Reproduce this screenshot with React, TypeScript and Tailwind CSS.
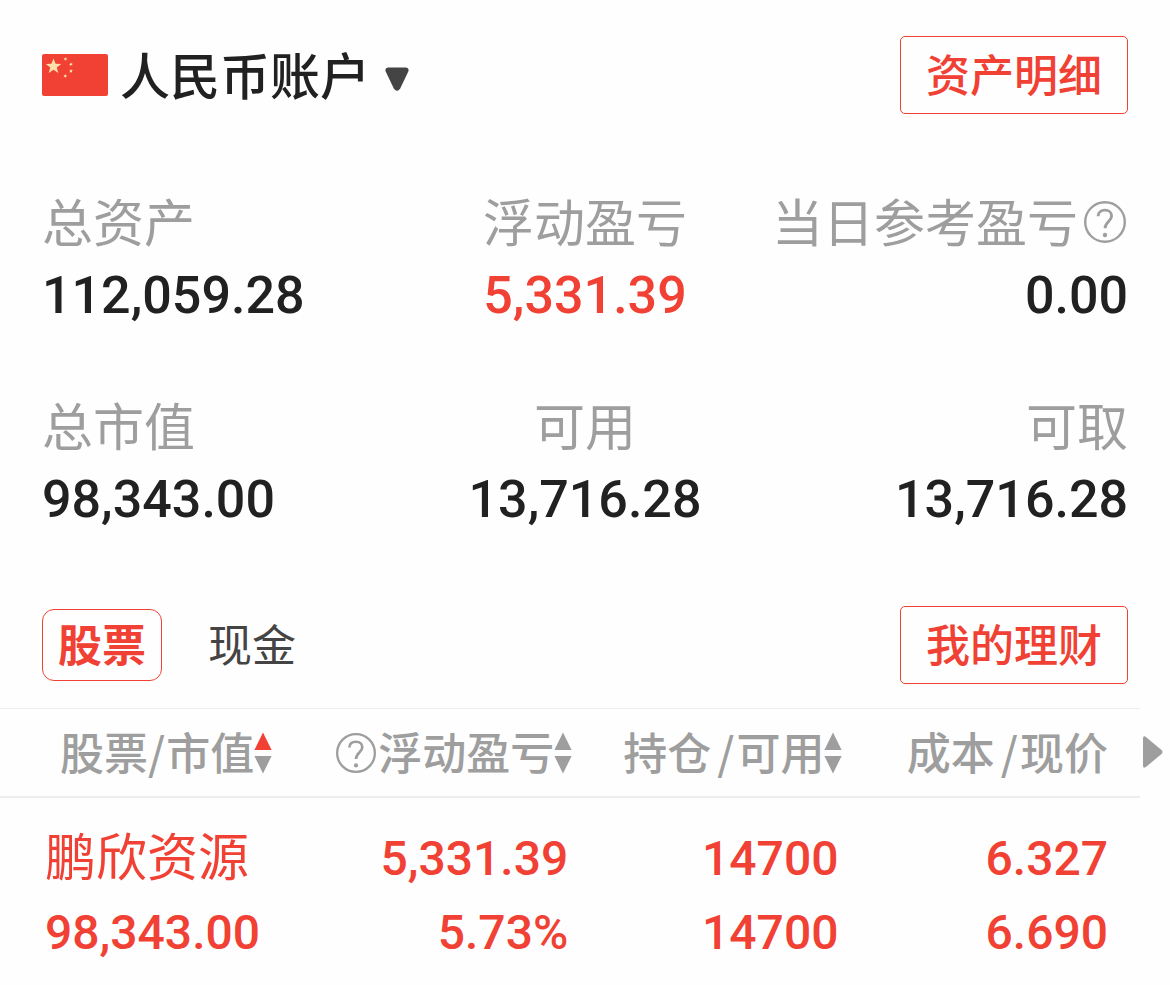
import { useState } from 'react';

const RED = 'text-[#f04134]';

function Flag() {
  const star = 'M0 -1 L0.26 -0.33 L0.97 -0.3 L0.41 0.14 L0.6 0.81 L0 0.42 L-0.6 0.81 L-0.41 0.14 L-0.97 -0.3 L-0.26 -0.33 Z';
  return (
    <svg viewBox="0 0 66 42" className="h-[42px] w-[66px] shrink-0" aria-hidden="true">
      <rect width="66" height="42" rx="2" fill="#f04134" />
      <g fill="#fddfa9">
        <path d={star} transform="translate(11.5 12.5) scale(8)" />
        <path d={star} transform="translate(23.5 5) rotate(20) scale(2.1)" />
        <path d={star} transform="translate(29 10.3) rotate(45) scale(2.1)" />
        <path d={star} transform="translate(29 17) scale(2.1)" />
        <path d={star} transform="translate(23.3 22) rotate(20) scale(2.1)" />
      </g>
    </svg>
  );
}

function Help({ className }: { className: string }) {
  return (
    <svg viewBox="0 0 42 42" fill="none" stroke="#9e9e9e" className={className} aria-hidden="true">
      <circle cx="21" cy="21" r="19.8" strokeWidth="2.4" />
      <path d="M14 15.2 C14.2 11.4 17 9.2 20.9 9.2 C24.9 9.2 27.6 11.5 27.6 15 C27.6 20.2 21 21 21 27.3" strokeWidth="2.8" />
      <circle cx="21" cy="34" r="2.2" fill="#9e9e9e" stroke="none" />
    </svg>
  );
}

function Sort({ up = false }: { up?: boolean }) {
  return (
    <svg viewBox="0 0 18 42" className="h-[42px] w-[18px] shrink-0" aria-hidden="true">
      <path d="M9 0.5 L17.6 18 H0.4 Z" fill={up ? '#f04134' : '#9e9e9e'} />
      <path d="M9 41.5 L17.6 24 H0.4 Z" fill="#9e9e9e" />
    </svg>
  );
}

function OutlineButton({ children }: { children: string }) {
  return (
    <button
      type="button"
      className="flex h-[78px] items-center rounded-[5px] border border-[#f04134] px-[25px] pb-1 text-[44px] leading-none font-medium text-[#f04134]"
    >
      {children}
    </button>
  );
}

const stats = [
  { label: '总资产', value: '112,059.28', align: 'items-start' },
  { label: '浮动盈亏', value: '5,331.39', align: 'items-center', red: true },
  { label: '当日参考盈亏', value: '0.00', align: 'items-end', help: true },
  { label: '总市值', value: '98,343.00', align: 'items-start' },
  { label: '可用', value: '13,716.28', align: 'items-center' },
  { label: '可取', value: '13,716.28', align: 'items-end' },
];

const columns = [
  { label: ['股票', '市值'], slash: 'mr-px', width: 'w-[26.5%]', cell: 'justify-start pl-[60px]', sort: true, up: true },
  { label: ['浮动盈亏'], width: 'w-[23.7%]', cell: 'justify-end', sort: true, help: true },
  { label: ['持仓', '可用'], slash: 'ml-1.5 mr-0.5', width: 'w-[23.7%]', cell: 'justify-end', sort: true },
  { label: ['成本', '现价'], slash: 'ml-1.5 mr-0.5', width: 'w-[26.1%]', cell: 'justify-end pr-8', sort: false },
];

const holdings = [
  { name: '鹏欣资源', value: '98,343.00', profit: '5,331.39', rate: '5.73%', held: '14700', usable: '14700', cost: '6.327', price: '6.690' },
];

export default function App() {
  const [tab, setTab] = useState('股票');
  const num = "font-['Roboto','Noto_Sans_CJK_SC',sans-serif] font-medium";

  return (
    <main className="min-h-screen bg-[#fefefe] pt-9 font-['Noto_Sans_CJK_SC',sans-serif] text-[#212121]">
      <header className="flex items-center justify-between px-[42px]">
        <button type="button" className="flex items-center text-[50px] leading-none font-medium">
          <Flag />
          <span className="ml-3 pb-1">人民币账户</span>
          <svg viewBox="0 0 24 24" className="mt-2 ml-[15px] size-6" aria-hidden="true">
            <path d="M3 0.5 H21 Q24.5 1 23.3 4.5 L15.2 21.5 Q12 26 8.8 21.5 L0.7 4.5 Q-0.5 1 3 0.5 Z" fill="#444444" />
          </svg>
        </button>
        <OutlineButton>资产明细</OutlineButton>
      </header>

      <dl className="mt-[72px] grid grid-cols-[1fr_auto_1fr] gap-y-[58px] px-[42px]">
        {stats.map((s) => (
          <div key={s.label} className={`flex flex-col ${s.align}`}>
            <dt className="mb-1.5 flex items-center text-[51px] leading-[68px] whitespace-nowrap text-[#9e9e9e]">
              {s.label}
              {s.help && <Help className="mt-1 mr-0.5 ml-1.5 size-[42px]" />}
            </dt>
            <dd className={`text-[52px] leading-[72px] ${num} ${s.red ? RED : ''}`}>{s.value}</dd>
          </div>
        ))}
      </dl>

      <div className="mt-[70px] flex items-center justify-between px-[42px] pb-6">
        <div role="tablist" className="flex items-center gap-[30px]">
          {['股票', '现金'].map((t) => (
            <button
              key={t}
              type="button"
              role="tab"
              aria-selected={tab === t}
              onClick={() => setTab(t)}
              className={`flex h-[72px] items-center rounded-xl border px-[15px] pb-1 text-[44px] leading-none ${
                tab === t ? 'border-[#f04134] font-bold text-[#f04134]' : 'border-transparent text-[#444444]'
              }`}
            >
              {t}
            </button>
          ))}
        </div>
        <OutlineButton>我的理财</OutlineButton>
      </div>

      <div className="flex items-start">
        <table className="min-w-0 flex-1 table-fixed border-collapse">
          <thead>
            <tr className="border-t border-b-2 border-[#ededed]">
              {columns.map((c) => (
                <th key={c.label[0]} scope="col" className={`p-0 font-medium ${c.width}`}>
                  <div className={`flex h-[87px] items-center text-[44px] leading-none whitespace-nowrap text-[#9e9e9e] ${c.cell}`}>
                    {c.help && <Help className="mr-0.5 size-10" />}
                    <span className="pb-1">
                      {c.label[0]}
                      {c.label[1] && <span className={c.slash}>/</span>}
                      {c.label[1]}
                    </span>
                    {c.sort && <Sort up={c.up} />}
                  </div>
                </th>
              ))}
            </tr>
          </thead>
          <tbody className={RED}>
            {holdings.map((h) => (
              <tr key={h.name} className={`text-right text-[48px] leading-[74px] ${num}`}>
                <td className="p-0 pt-6 pl-[45px] text-left">
                  <div className="text-[51px] font-normal">{h.name}</div>
                  <div>{h.value}</div>
                </td>
                <td className="p-0 pt-6 pr-1">
                  <div>{h.profit}</div>
                  <div>{h.rate}</div>
                </td>
                <td className="p-0 pt-6 pr-1">
                  <div>{h.held}</div>
                  <div>{h.usable}</div>
                </td>
                <td className="p-0 pt-6 pr-8">
                  <div>{h.cost}</div>
                  <div>{h.price}</div>
                </td>
              </tr>
            ))}
          </tbody>
        </table>
        <button type="button" aria-label="更多列" className="flex h-[87px] w-[30px] items-center pl-[3px]">
          <svg viewBox="0 0 20 34" className="h-[34px] w-5" aria-hidden="true">
            <path d="M0 3 Q0.5 0 3.5 2.5 L18.5 15 Q20.5 17 18.5 19 L3.5 31.5 Q0.5 34 0 31 Z" fill="#9e9e9e" />
          </svg>
        </button>
      </div>
    </main>
  );
}
